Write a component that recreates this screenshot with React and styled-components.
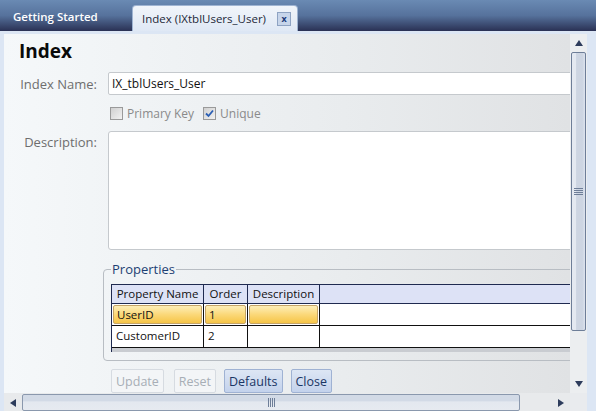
import React from "react";
import styled, { createGlobalStyle } from "styled-components";

const GlobalStyle = createGlobalStyle`
    html, body {
        margin: 0;
        padding: 0;
        background: #ffffff;
    }
    body {
        font-family: "Open Sans", "Noto Sans", sans-serif;
    }
`;

const columns = [
    { title: "Property Name", width: 92 },
    { title: "Order", width: 44 },
    { title: "Description", width: 72 },
];

const rows = [
    { name: "UserID", order: "1", selected: true },
    { name: "CustomerID", order: "2", selected: false },
];

function Check() {
    return (
        <svg width="9" height="9" viewBox="0 0 9 9">
            <path d="M1 4.5 L3.5 7 L8 1.5" fill="none" stroke="#2b5fb4" strokeWidth="1.8" />
        </svg>
    );
}

function Arrow({ dir }) {
    const pts = {
        up: "0,6 4,0 8,6",
        down: "0,0 8,0 4,6",
        left: "6,0 6,8 0,4",
        right: "0,0 0,8 6,4",
    }[dir];
    const vertical = dir === "up" || dir === "down";
    return (
        <svg width={vertical ? 8 : 6} height={vertical ? 6 : 8} viewBox={vertical ? "0 0 8 6" : "0 0 6 8"}>
            <polygon points={pts} fill="#2d3c5c" />
        </svg>
    );
}

export default function App() {
    return (
        <Page>
            <GlobalStyle />
            <TabBar>
                <Tab>Getting Started</Tab>
                <ActiveTab>
                    Index (IXtblUsers_User)
                    <CloseBox>x</CloseBox>
                </ActiveTab>
            </TabBar>
            <Frame>
                <ScrollGrid>
                    <Content>
                        <Heading>Index</Heading>
                        <Form>
                            <Label>Index Name:</Label>
                            <TextInput>IX_tblUsers_User</TextInput>
                            <span />
                            <CheckRow>
                                <CheckItem>
                                    <CheckBox />
                                    Primary Key
                                </CheckItem>
                                <CheckItem>
                                    <CheckBox>
                                        <Check />
                                    </CheckBox>
                                    Unique
                                </CheckItem>
                            </CheckRow>
                            <Label $top>Description:</Label>
                            <TextArea />
                        </Form>
                        <Group>
                            <Legend>Properties</Legend>
                            <Grid>
                                <HeaderRow>
                                    {columns.map((c) => (
                                        <HeaderCell key={c.title} $w={c.width}>
                                            {c.title}
                                        </HeaderCell>
                                    ))}
                                    <HeaderFill />
                                </HeaderRow>
                                {rows.map((r) => (
                                    <DataRow key={r.name}>
                                        <Cell $w={92} $sel={r.selected}>
                                            <CellInner $sel={r.selected}>{r.name}</CellInner>
                                        </Cell>
                                        <Cell $w={44} $sel={r.selected}>
                                            <CellInner $sel={r.selected}>{r.order}</CellInner>
                                        </Cell>
                                        <Cell $w={72} $sel={r.selected}>
                                            <CellInner $sel={r.selected} />
                                        </Cell>
                                        <RowFill />
                                    </DataRow>
                                ))}
                                <GridFooter />
                            </Grid>
                        </Group>
                        <Buttons>
                            <Button disabled>Update</Button>
                            <Button disabled>Reset</Button>
                            <Button>Defaults</Button>
                            <Button>Close</Button>
                        </Buttons>
                    </Content>
                    <VScroll>
                        <VArrow>
                            <Arrow dir="up" />
                        </VArrow>
                        <VThumb>
                            <GripH />
                        </VThumb>
                        <VTrack />
                        <VArrow>
                            <Arrow dir="down" />
                        </VArrow>
                    </VScroll>
                    <HScroll>
                        <HArrow>
                            <Arrow dir="left" />
                        </HArrow>
                        <HThumb>
                            <GripV />
                        </HThumb>
                        <HTrack />
                        <HArrow>
                            <Arrow dir="right" />
                        </HArrow>
                    </HScroll>
                    <Corner />
                </ScrollGrid>
            </Frame>
        </Page>
    );
}

const Page = styled.div`
    width: 596px;
    height: 411px;
    display: flex;
    flex-direction: column;
    overflow: hidden;
`;

const TabBar = styled.div`
    height: 31px;
    flex: none;
    display: flex;
    align-items: flex-end;
    background: linear-gradient(to bottom, #6a8ab3 0%, #56729c 50%, #2a3154 100%);
    padding-left: 13px;
    box-sizing: border-box;
`;

const Tab = styled.div`
    height: 26px;
    width: 119px;
    line-height: 24px;
    color: #ffffff;
    font-size: 11.5px;
    font-weight: 600;
`;

const ActiveTab = styled.div`
    height: 26px;
    width: 166px;
    box-sizing: border-box;
    border-radius: 4px 4px 0 0;
    background: linear-gradient(to bottom, #f1f5fa, #dfe8f5);
    border: 1px solid #9fb4d2;
    border-bottom: none;
    padding-left: 9px;
    display: flex;
    align-items: center;
    font-size: 11.5px;
    color: #1d2838;
    gap: 11px;
`;

const CloseBox = styled.div`
    width: 14px;
    height: 14px;
    box-sizing: border-box;
    border: 1px solid #8ea3c3;
    background: #c7d5ea;
    color: #1c3a78;
    font-size: 9px;
    font-weight: 700;
    display: flex;
    align-items: center;
    justify-content: center;
    line-height: 1;
`;

const Frame = styled.div`
    flex: 1;
    display: flex;
    flex-direction: column;
    background: #dce6f4;
    padding: 3px 9px 2px 4px;
    border-bottom: 1px dotted #7088ab;
    margin-bottom: 2px;
`;

const ScrollGrid = styled.div`
    flex: 1;
    display: grid;
    grid-template-columns: 1fr 17px;
    grid-template-rows: 1fr 19px;
    min-height: 0;
`;

const Content = styled.div`
    overflow: hidden;
    background: linear-gradient(to right, #f5f8fa 0%, #e9ecee 60%, #e0e2e4 100%);
    min-width: 0;
    min-height: 0;
`;

const Heading = styled.h1`
    margin: 5px 0 0 15px;
    font-size: 19px;
    line-height: 24px;
    font-weight: 700;
    color: #0a0a0a;
`;

const Form = styled.div`
    margin-top: 9px;
    display: grid;
    grid-template-columns: 93px 540px;
    column-gap: 11px;
    row-gap: 11px;
`;

const Label = styled.div`
    text-align: right;
    font-size: 13px;
    color: #6e6e6e;
    align-self: ${(p) => (p.$top ? "start" : "center")};
    margin-top: ${(p) => (p.$top ? "2px" : "0")};
`;

const TextInput = styled.div`
    height: 23px;
    box-sizing: border-box;
    border: 1px solid #c5c9cd;
    border-radius: 2px;
    background: #ffffff;
    font-size: 12px;
    color: #111;
    padding-left: 3px;
    display: flex;
    align-items: center;
`;

const CheckRow = styled.div`
    display: flex;
    gap: 9px;
    height: 14px;
    align-items: center;
    padding-left: 2px;
`;

const CheckItem = styled.label`
    display: flex;
    align-items: center;
    gap: 4px;
    font-size: 12px;
    color: #8a8a8a;
`;

const CheckBox = styled.span`
    width: 13px;
    height: 13px;
    box-sizing: border-box;
    border: 1px solid #9a9a9a;
    background: linear-gradient(135deg, #d0d0d0, #f2f2f2);
    display: flex;
    align-items: center;
    justify-content: center;
`;

const TextArea = styled.div`
    height: 119px;
    box-sizing: border-box;
    border: 1px solid #c5c9cd;
    border-radius: 3px;
    background: #ffffff;
`;

const Group = styled.fieldset`
    margin: 10px 0 0 99px;
    width: 480px;
    box-sizing: border-box;
    border: 1px solid #b8bdc3;
    border-radius: 4px;
    padding: 6px 0 8px 7px;
`;

const Legend = styled.legend`
    font-size: 13px;
    color: #1d3f73;
    padding: 0 1px;
    margin-left: 0;
`;

const Grid = styled.div`
    border-left: 1px solid #1f2a50;
    background: #ffffff;
`;

const HeaderRow = styled.div`
    display: flex;
    height: 20px;
    box-sizing: border-box;
    background: #dde2f6;
    border-top: 1px solid #1f2a50;
    border-bottom: 1px solid #1f2a50;
`;

const HeaderCell = styled.div`
    width: ${(p) => p.$w}px;
    flex: none;
    box-sizing: border-box;
    border-right: 1px solid #1f2a50;
    font-size: 11.5px;
    color: #111;
    text-align: center;
    line-height: 18px;
`;

const HeaderFill = styled.div`
    flex: 1;
`;

const DataRow = styled.div`
    display: flex;
    height: 22px;
    box-sizing: border-box;
    border-bottom: 1px solid #111111;
`;

const Cell = styled.div`
    width: ${(p) => p.$w}px;
    flex: none;
    box-sizing: border-box;
    border-right: 1px solid #111111;
    padding: ${(p) => (p.$sel ? "1px" : "0")};
    display: flex;
`;

const CellInner = styled.div`
    flex: 1;
    box-sizing: border-box;
    font-size: 11.5px;
    color: #111;
    padding: ${(p) => (p.$sel ? "1px 3px" : "2px 4px")};
    line-height: 16px;
    border-radius: ${(p) => (p.$sel ? "2px" : "0")};
    border: ${(p) => (p.$sel ? "1px solid #c4a467" : "none")};
    background: ${(p) =>
        p.$sel ? "linear-gradient(to bottom, #fdeeb8 0%, #fbd879 50%, #f6c547 100%)" : "transparent"};
`;

const RowFill = styled.div`
    flex: 1;
    background: #ffffff;
`;

const GridFooter = styled.div`
    height: 4px;
    background: #c9ccd1;
`;

const Buttons = styled.div`
    display: flex;
    gap: 8px;
    margin: 8px 0 0 107px;
`;

const Button = styled.button`
    height: 24px;
    box-sizing: border-box;
    padding: 0 4px;
    border-radius: 2px;
    font-family: "Open Sans", "Noto Sans", sans-serif;
    font-size: 12.5px;
    border: 1px solid ${(p) => (p.disabled ? "#d6dbe1" : "#9fb2d3")};
    background: ${(p) =>
        p.disabled ? "#f3f5f7" : "linear-gradient(to bottom, #dde6f4, #c3d2ec)"};
    color: ${(p) => (p.disabled ? "#a7aeb6" : "#1a3565")};
    &:first-child {
        margin-right: 2px;
    }
`;

const VScroll = styled.div`
    display: flex;
    flex-direction: column;
    background: #eceef0;
`;

const VArrow = styled.div`
    height: 18px;
    flex: none;
    display: flex;
    align-items: center;
    justify-content: center;
`;

const VThumb = styled.div`
    height: 279px;
    flex: none;
    margin: 0 1px;
    box-sizing: border-box;
    border: 1px solid #6e7e98;
    border-radius: 2px;
    background: linear-gradient(to right, #e4e9f1 0%, #e4e9f1 30%, #cdd5e2 35%, #cdd5e2 80%, #dce3ee 100%);
    display: flex;
    align-items: center;
    justify-content: center;
`;

const VTrack = styled.div`
    flex: 1;
`;

const GripH = styled.div`
    width: 9px;
    height: 7px;
    background: repeating-linear-gradient(to bottom, #6e7e98 0, #6e7e98 1px, transparent 1px, transparent 2px);
`;

const HScroll = styled.div`
    display: flex;
    background: #e8eaec;
`;

const HArrow = styled.div`
    width: 18px;
    flex: none;
    display: flex;
    align-items: center;
    justify-content: center;
`;

const HThumb = styled.div`
    width: 498px;
    flex: none;
    margin: 1px 0 1px;
    box-sizing: border-box;
    border: 1px solid #8a98ad;
    border-radius: 2px;
    background: linear-gradient(to bottom, #d2dae6 0%, #d2dae6 40%, #e3e8ef 45%, #e6eaf0 100%);
    display: flex;
    align-items: center;
    justify-content: center;
`;

const GripV = styled.div`
    width: 7px;
    height: 9px;
    background: repeating-linear-gradient(to right, #6e7e98 0, #6e7e98 1px, transparent 1px, transparent 2px);
`;

const HTrack = styled.div`
    flex: 1;
`;

const Corner = styled.div`
    background: #e9ebee;
`;
